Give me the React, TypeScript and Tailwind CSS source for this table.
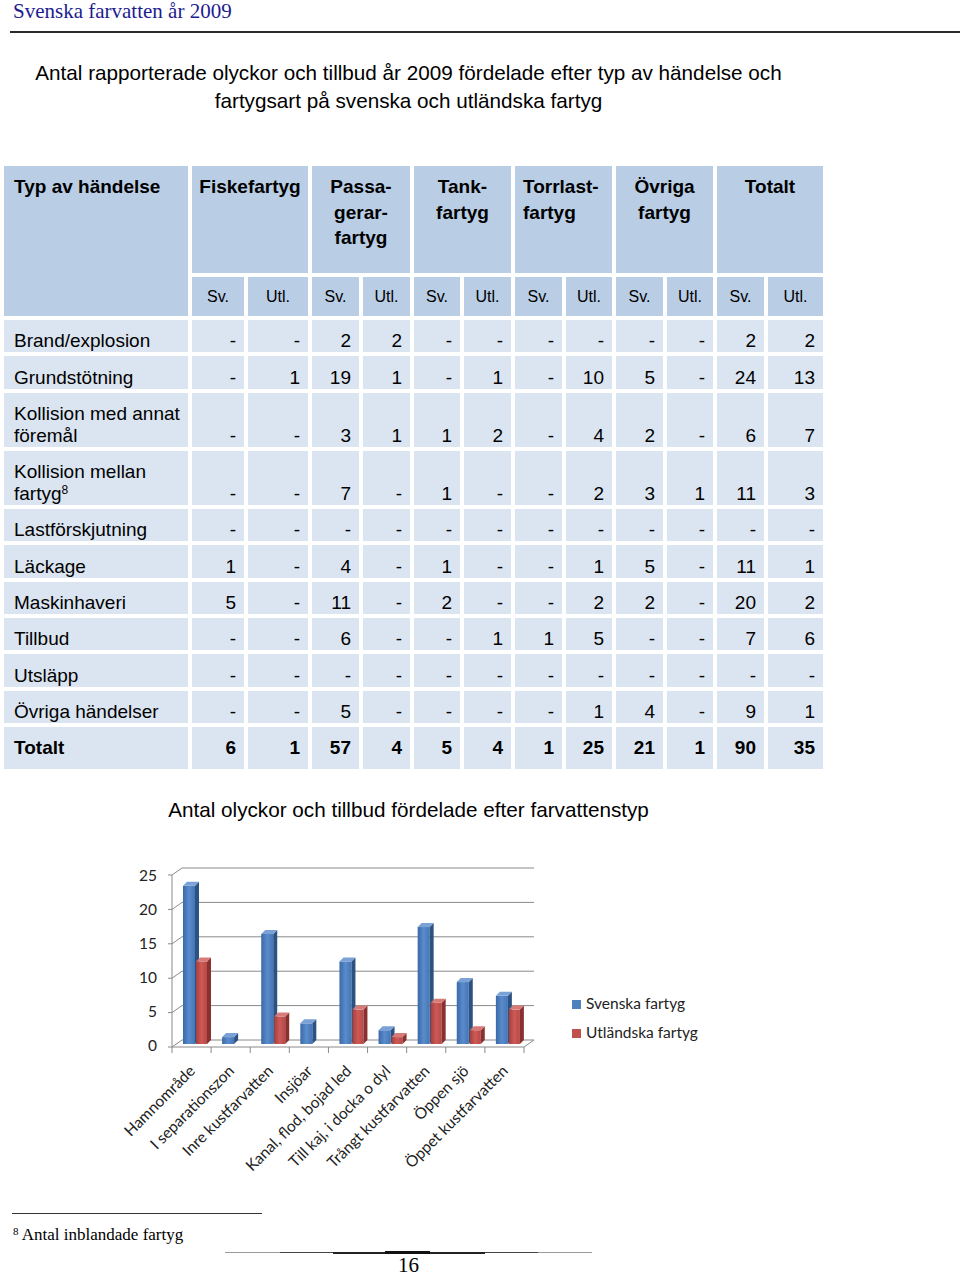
import type { ReactNode } from "react";

const arial = "font-['Liberation_Sans',Arial,sans-serif]";
const times = "font-['Liberation_Serif','Times_New_Roman',serif]";

const rows: { label: ReactNode; values: string[]; bold?: boolean }[] = [
  { label: "Brand/explosion", values: ["-", "-", "2", "2", "-", "-", "-", "-", "-", "-", "2", "2"] },
  { label: "Grundstötning", values: ["-", "1", "19", "1", "-", "1", "-", "10", "5", "-", "24", "13"] },
  {
    label: (
      <>
        Kollision med annat
        <br />
        föremål
      </>
    ),
    values: ["-", "-", "3", "1", "1", "2", "-", "4", "2", "-", "6", "7"],
  },
  {
    label: (
      <>
        Kollision mellan
        <br />
        fartyg<sup className="text-[12px]">8</sup>
      </>
    ),
    values: ["-", "-", "7", "-", "1", "-", "-", "2", "3", "1", "11", "3"],
  },
  { label: "Lastförskjutning", values: Array(12).fill("-") },
  { label: "Läckage", values: ["1", "-", "4", "-", "1", "-", "-", "1", "5", "-", "11", "1"] },
  { label: "Maskinhaveri", values: ["5", "-", "11", "-", "2", "-", "-", "2", "2", "-", "20", "2"] },
  { label: "Tillbud", values: ["-", "-", "6", "-", "-", "1", "1", "5", "-", "-", "7", "6"] },
  { label: "Utsläpp", values: Array(12).fill("-") },
  { label: "Övriga händelser", values: ["-", "-", "5", "-", "-", "-", "-", "1", "4", "-", "9", "1"] },
  {
    label: "Totalt",
    values: ["6", "1", "57", "4", "5", "4", "1", "25", "21", "1", "90", "35"],
    bold: true,
  },
];

const groups: { title: ReactNode; align: string }[] = [
  { title: "Fiskefartyg", align: "text-center" },
  {
    title: (
      <>
        Passa-
        <br />
        gerar-
        <br />
        fartyg
      </>
    ),
    align: "text-center",
  },
  {
    title: (
      <>
        Tank-
        <br />
        fartyg
      </>
    ),
    align: "text-center",
  },
  {
    title: (
      <>
        Torrlast-
        <br />
        fartyg
      </>
    ),
    align: "text-left pl-[8px]",
  },
  {
    title: (
      <>
        Övriga
        <br />
        fartyg
      </>
    ),
    align: "text-center",
  },
  { title: "Totalt", align: "text-center" },
];

function AccidentTable() {
  return (
    <div
      className={`ml-[4px] grid w-[819px] grid-cols-[184px_52px_60px_47px_47px_46px_47px_47px_46px_47px_46px_47px_55px] grid-rows-[107px_39px_32px_33px_54px_54px_32px_33px_32px_32px_33px_32px_42px] gap-[4px] text-black ${arial}`}
    >
      <div className="row-span-2 bg-[#b9cde5] pl-[10px] pt-[8px] text-[19px] font-bold leading-[25.5px]">
        Typ av händelse
      </div>
      {groups.map((g, i) => (
        <div key={i} className={`col-span-2 bg-[#b9cde5] pt-[8px] text-[19px] font-bold leading-[25.5px] ${g.align}`}>
          {g.title}
        </div>
      ))}
      {Array.from({ length: 12 }).map((_, i) => (
        <div key={i} className="flex items-center justify-center bg-[#b9cde5] text-[16px]">
          {i % 2 === 0 ? "Sv." : "Utl."}
        </div>
      ))}

      {rows.map((r, ri) => (
        <div key={ri} className="contents">
          <div
            className={`flex items-end bg-[#dbe5f1] pl-[10px] text-[19px] leading-[22px] ${r.bold ? "pb-[10px] font-bold" : ""}`}
          >
            <span>{r.label}</span>
          </div>
          {r.values.map((v, vi) => (
            <div
              key={vi}
              className={`flex items-end justify-end bg-[#dbe5f1] pr-[8px] text-[19px] leading-[22px] ${r.bold ? "pb-[10px] font-bold" : ""}`}
            >
              {v}
            </div>
          ))}
        </div>
      ))}
    </div>
  );
}

const svenska = [23, 1, 16, 3, 12, 2, 17, 9, 7];
const utlandska = [12, 0, 4, 0, 5, 1, 6, 2, 5];
const categories = [
  "Hamnområde",
  "I separationszon",
  "Inre kustfarvatten",
  "Insjöar",
  "Kanal, flod, bojad led",
  "Till kaj, i docka o dyl",
  "Trångt kustfarvatten",
  "Öppen sjö",
  "Öppet kustfarvatten",
];

const X0 = 172;
const STEP = 39.11;
const BASE = 1044;
const UNIT = 6.88;

function Bar({ x, w, v, front, side, top }: { x: number; w: number; v: number; front: string; side: string; top: string }) {
  if (v <= 0) return null;
  const t = BASE - v * UNIT;
  return (
    <g>
      <rect x={x} y={t} width={w} height={BASE - t} fill={front} />
      <polygon points={`${x + w},${t} ${x + w + 4},${t - 4} ${x + w + 4},${BASE - 4} ${x + w},${BASE}`} fill={side} />
      <polygon points={`${x},${t} ${x + 4},${t - 4} ${x + w + 4},${t - 4} ${x + w},${t}`} fill={top} />
    </g>
  );
}

function Chart() {
  const grid = [0, 1, 2, 3, 4, 5];
  return (
    <svg width={960} height={350} viewBox="0 850 960 350" className="block">
      <defs>
        <linearGradient id="blueFront" x1="0" x2="1" y1="0" y2="0">
          <stop offset="0" stopColor="#3a69a8" />
          <stop offset="0.5" stopColor="#5a8bcb" />
          <stop offset="1" stopColor="#4475b6" />
        </linearGradient>
        <linearGradient id="redFront" x1="0" x2="1" y1="0" y2="0">
          <stop offset="0" stopColor="#a53f3c" />
          <stop offset="0.5" stopColor="#cd5a57" />
          <stop offset="1" stopColor="#b74946" />
        </linearGradient>
      </defs>

      <g stroke="#8a8a8a" strokeWidth={1} fill="none">
        {grid.map((k) => {
          const y = 1040 - k * 34.4;
          return (
            <g key={k}>
              <line x1={182} y1={y} x2={534} y2={y} />
              <line x1={172} y1={y + 7} x2={182} y2={y} />
              <line x1={168} y1={y + 7} x2={172} y2={y + 7} />
            </g>
          );
        })}
        <line x1={172} y1={875} x2={172} y2={1047} />
        <line x1={172} y1={1047} x2={524} y2={1047} />
        <line x1={524} y1={1047} x2={534} y2={1040} />
        {Array.from({ length: 10 }).map((_, i) => (
          <line key={i} x1={X0 + i * STEP} y1={1047} x2={X0 + i * STEP} y2={1053} />
        ))}
      </g>

      {svenska.map((v, i) => {
        const c = X0 + i * STEP;
        return (
          <g key={i}>
            <Bar x={c + 11} w={12} v={v} front="url(#blueFront)" side="#2c5282" top="#7aa2d6" />
            <Bar x={c + 24} w={11} v={utlandska[i]} front="url(#redFront)" side="#8a302e" top="#d87a77" />
          </g>
        );
      })}

      <g fontFamily="Lato, 'Open Sans', sans-serif" fontSize={15.5} fill="#222">
        {grid.map((k) => (
          <text key={k} x={157} y={1047 - k * 34} textAnchor="end" dominantBaseline="middle">
            {k * 5}
          </text>
        ))}
        {categories.map((c, i) => {
          const x = X0 + i * STEP + 24;
          const y = 1072;
          return (
            <text key={c} x={x} y={y} textAnchor="end" transform={`rotate(-45 ${x} ${y})`}>
              {c}
            </text>
          );
        })}
        <rect x={572} y={1000} width={9} height={9} fill="#4f81bd" />
        <text x={586} y={1005} dominantBaseline="middle">
          Svenska fartyg
        </text>
        <rect x={572} y={1029} width={9} height={9} fill="#c0504d" />
        <text x={586} y={1034} dominantBaseline="middle">
          Utländska fartyg
        </text>
      </g>
    </svg>
  );
}

export default function App() {
  return (
    <div className={`h-[1276px] w-[960px] overflow-hidden bg-white text-black ${arial}`}>
      <div className="ml-[10px] h-[33px] border-b-2 border-[#2b2b2b]">
        <div className={`pl-[3px] text-[21px] leading-[22px] text-[#1d1d8f] ${times}`}>Svenska farvatten år 2009</div>
      </div>

      <h1 className="mt-[26px] w-[817px] text-center text-[20.7px] font-normal leading-[28px]">
        Antal rapporterade olyckor och tillbud år 2009 fördelade efter typ av händelse och
        <br />
        fartygsart på svenska och utländska fartyg
      </h1>

      <div className="mt-[51px]">
        <AccidentTable />
      </div>

      <p className="mt-[27px] w-[817px] text-center text-[20.7px] leading-[28px]">
        Antal olyckor och tillbud fördelade efter farvattenstyp
      </p>

      <div className="mt-[26px]">
        <Chart />
      </div>

      <div className="ml-[12px] mt-[13px] h-px w-[250px] bg-[#333]" />
      <p className={`ml-[13px] mt-[11px] text-[17px] leading-[20px] ${times}`}>
        <sup className="text-[11px]">8</sup> Antal inblandade fartyg
      </p>

      <div className="ml-[225px] mt-[6px] flex h-[3px] w-[367px] items-center">
        <div className="h-px w-[55px] bg-[#9a9a9a]" />
        <div className="h-px w-[53px] bg-[#444]" />
        <div className="h-[2px] w-[52px] bg-[#222]" />
        <div className="h-[3px] w-[45px] bg-[#111]" />
        <div className="h-[2px] w-[55px] bg-[#222]" />
        <div className="h-px w-[53px] bg-[#444]" />
        <div className="h-px w-[54px] bg-[#9a9a9a]" />
      </div>
      <p className={`mt-[2px] w-[817px] text-center text-[21px] leading-[19px] ${times}`}>16</p>
    </div>
  );
}
